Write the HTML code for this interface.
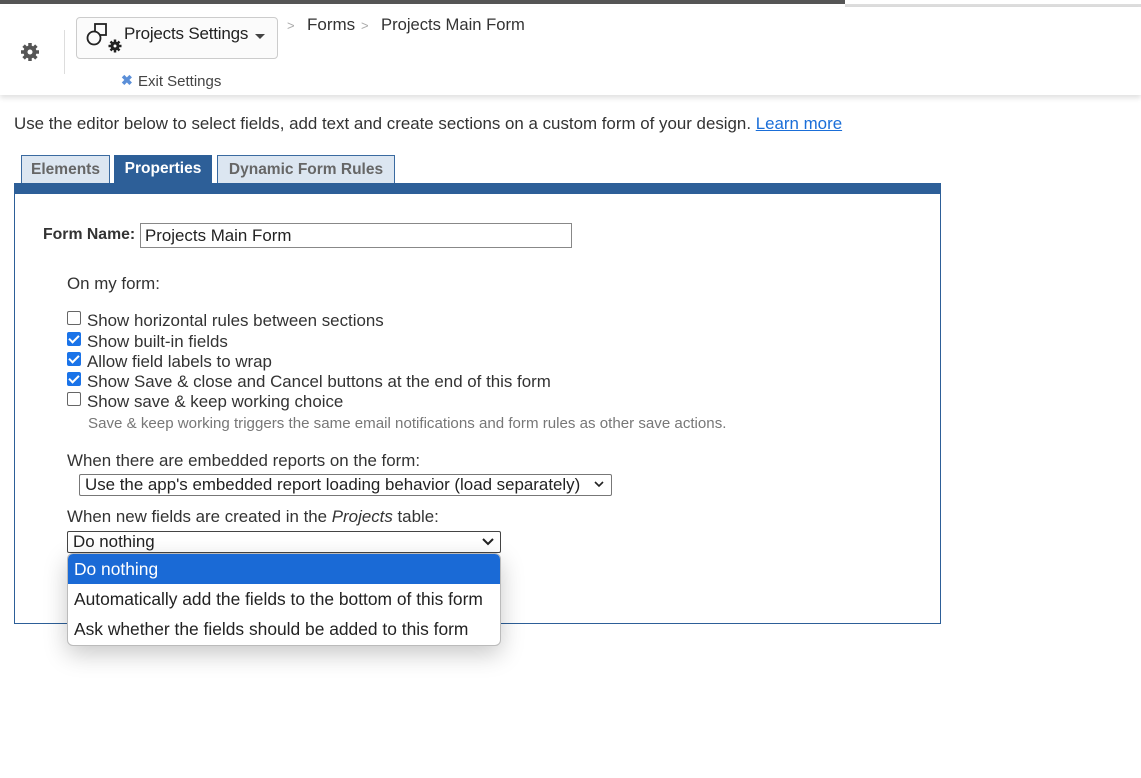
<!DOCTYPE html>
<html><head><style>
body{margin:0;width:1141px;height:778px;background:#fff;font-family:"Liberation Sans",sans-serif;color:#333;position:relative;overflow:hidden}
.a{position:absolute;white-space:nowrap}
.cb{position:absolute;width:12px;height:12px;border:1px solid #666;border-radius:2px;background:#fff}
.cb.on{background:#1a73e8;border-color:#1a73e8}
.cb.on:after{content:"";position:absolute;left:3px;top:0px;width:4px;height:8px;border:solid #fff;border-width:0 2px 2px 0;transform:rotate(45deg)}
.t{font-size:16.9px}
.o{height:30px;color:#222;font-size:17.4px;line-height:30px;padding-left:6px}
</style></head><body>
<div class="a" style="left:0;top:0;width:845px;height:4px;background:#555"></div>
<div class="a" style="left:845px;top:4px;width:296px;height:3px;background:#ddd"></div>
<div class="a" style="left:0;top:7px;width:1141px;height:88px;background:#fff;box-shadow:0 3px 5px rgba(0,0,0,.12)"></div>
<svg class="a" style="left:20px;top:42px" width="20" height="20" viewBox="0 0 20 20"><g fill="#555"><circle cx="10" cy="10" r="6.5"/><g stroke="#555" stroke-width="3.5"><line x1="10" y1="1" x2="10" y2="19"/><line x1="1" y1="10" x2="19" y2="10"/><line x1="3.6" y1="3.6" x2="16.4" y2="16.4"/><line x1="16.4" y1="3.6" x2="3.6" y2="16.4"/></g></g><circle cx="10" cy="10" r="2.5" fill="#fff"/></svg>
<div class="a" style="left:64px;top:30px;width:1px;height:44px;background:#ddd"></div>
<div class="a" style="left:76px;top:17px;width:200px;height:40px;border:1px solid #ccc;border-radius:4px;background:#fbfbfb"></div>
<svg class="a" style="left:84px;top:20px" width="40" height="34" viewBox="0 0 40 34"><rect x="11" y="4" width="11" height="11" fill="none" stroke="#222" stroke-width="1.8"/><circle cx="10" cy="18" r="6.5" fill="#fbfbfb" stroke="#222" stroke-width="1.8"/><circle cx="31" cy="26" r="4.5" fill="#222"/><g stroke="#222" stroke-width="2.5"><line x1="31" y1="19.5" x2="31" y2="32.5"/><line x1="24.5" y1="26" x2="37.5" y2="26"/><line x1="26.5" y1="21.5" x2="35.5" y2="30.5"/><line x1="35.5" y1="21.5" x2="26.5" y2="30.5"/></g><circle cx="31" cy="26" r="1.5" fill="#fff"/></svg>
<div class="a" style="left:124px;top:24px;font-size:17px;color:#222;letter-spacing:-0.2px">Projects Settings</div>
<div class="a" style="left:255px;top:34px;border:5px solid transparent;border-top-color:#444;border-bottom:0"></div>
<div class="a" style="left:287px;top:18px;color:#aaa;font-size:13px">&gt;</div>
<div class="a" style="left:307px;top:15px;font-size:17px">Forms</div>
<div class="a" style="left:361px;top:18px;color:#aaa;font-size:13px">&gt;</div>
<div class="a" style="left:381px;top:15px;font-size:16.6px">Projects Main Form</div>
<div class="a" style="left:121px;top:72px;color:#5b8fd8;font-size:14px;font-weight:bold">✖</div>
<div class="a" style="left:138px;top:73px;font-size:15px;color:#444">Exit Settings</div>
<div class="a" style="left:14px;top:114px;font-size:16.9px;color:#333">Use the editor below to select fields, add text and create sections on a custom form of your design. <span style="color:#1a6ed8;text-decoration:underline">Learn more</span></div>
<div class="a" style="left:21px;top:155px;width:87px;height:28px;background:#dce6f1;border:1px solid #3a6aa0;border-bottom:0;font-weight:bold;font-size:15.5px;color:#666;text-align:center;line-height:27px">Elements</div>
<div class="a" style="left:114px;top:155px;width:98px;height:28px;background:#2d5f98;font-weight:bold;font-size:15.5px;color:#fff;text-align:center;line-height:27px">Properties</div>
<div class="a" style="left:217px;top:155px;width:176px;height:28px;background:#dce6f1;border:1px solid #3a6aa0;border-bottom:0;font-weight:bold;font-size:15.5px;color:#666;text-align:center;line-height:27px">Dynamic Form Rules</div>
<div class="a" style="left:14px;top:183px;width:927px;height:11px;background:#2d5f98"></div>
<div class="a" style="left:14px;top:194px;width:925px;height:429px;border:1px solid #2d5f98;border-top:0"></div>
<div class="a" style="left:43px;top:226px;font-weight:bold;color:#333;font-size:15.8px">Form Name:</div>
<div class="a" style="left:140px;top:223px;width:430px;height:23px;border:1px solid #888"></div>
<div class="a t" style="left:145px;top:226px;color:#222">Projects Main Form</div>
<div class="a t" style="left:67px;top:274px">On my form:</div>
<div class="cb" style="left:67px;top:311px"></div><div class="a t" style="left:87px;top:311px">Show horizontal rules between sections</div>
<div class="cb on" style="left:67px;top:332px"></div><div class="a t" style="left:87px;top:332px">Show built-in fields</div>
<div class="cb on" style="left:67px;top:352px"></div><div class="a t" style="left:87px;top:352px">Allow field labels to wrap</div>
<div class="cb on" style="left:67px;top:372px"></div><div class="a t" style="left:87px;top:372px">Show Save &amp; close and Cancel buttons at the end of this form</div>
<div class="cb" style="left:67px;top:392px"></div><div class="a t" style="left:87px;top:392px">Show save &amp; keep working choice</div>
<div class="a" style="left:88px;top:415px;font-size:15.1px;color:#777">Save &amp; keep working triggers the same email notifications and form rules as other save actions.</div>
<div class="a t" style="left:67px;top:451px">When there are embedded reports on the form:</div>
<div class="a" style="left:79px;top:474px;width:531px;height:20px;border:1px solid #777;border-radius:2px"></div>
<div class="a t" style="left:85px;top:475px;color:#222">Use the app's embedded report loading behavior (load separately)</div>
<svg class="a" style="left:594px;top:481px" width="10" height="7"><path d="M1 1l4 4 4-4" fill="none" stroke="#222" stroke-width="1.6"/></svg>
<div class="a t" style="left:67px;top:507px">When new fields are created in the <i>Projects</i> table:</div>
<div class="a" style="left:67px;top:531px;width:432px;height:20px;border:1px solid #444;border-radius:2px"></div>
<div class="a t" style="left:73px;top:532px;color:#222">Do nothing</div>
<svg class="a" style="left:482px;top:538px" width="12" height="8"><path d="M1 1l5 5 5-5" fill="none" stroke="#222" stroke-width="2"/></svg>
<div class="a" style="left:67px;top:553px;width:432px;height:91px;background:#fff;border:1px solid #bbb;border-radius:6px;box-shadow:0 8px 24px rgba(0,0,0,.22);overflow:hidden">
<div class="o" style="background:#1a6ad6;color:#fff">Do nothing</div>
<div class="o">Automatically add the fields to the bottom of this form</div>
<div class="o">Ask whether the fields should be added to this form</div>
</div>
</body></html>
